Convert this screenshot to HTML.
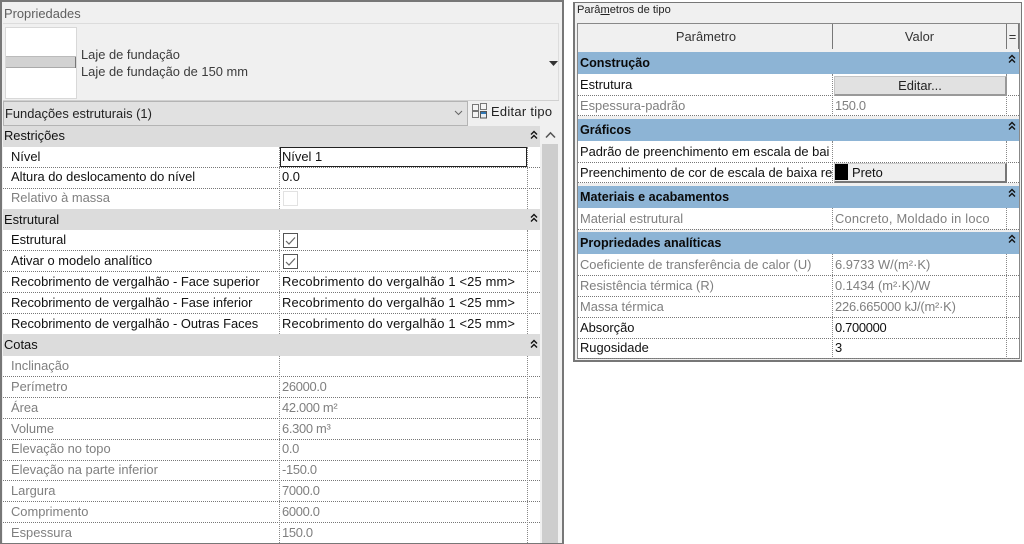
<!DOCTYPE html>
<html lang="pt"><head><meta charset="utf-8"><title>Propriedades</title>
<style>
html,body{margin:0;padding:0;background:#fff}
#r{position:relative;width:1024px;height:544px;overflow:hidden;background:#fff;font:12.9px/20px "Liberation Sans",sans-serif;color:#111}
#r div{position:absolute;white-space:nowrap}
.b{background:#777}
.t{height:20px}
.g{color:#7f7f7f}
.h{background:#dcdcdc}
.c{background:#8db4d5}
.dh{height:0;border-top:1px dotted #777}
.dv{width:0;border-left:1px dotted #888}
.bold{font-weight:bold;color:#0a0a0a;font-size:12.6px}
.cb{width:13px;height:13px;border:1px solid #555;background:#fff}
.rec{letter-spacing:.17px}
.n{letter-spacing:-.3px}
svg{position:absolute;display:block}
</style></head><body><div id="r">

<!-- LEFT PANEL -->
<div style="left:0;top:0;width:564px;height:544px;background:#f0f0f0"></div>
<div class="b" style="left:0;top:0;width:564px;height:2px"></div>
<div class="b" style="left:0;top:0;width:2px;height:544px"></div>
<div class="b" style="left:562px;top:0;width:2px;height:544px"></div>
<div class="b" style="left:0;top:543px;width:564px;height:1px"></div>
<div class="t" style="left:4px;top:4px;color:#5f5f5f">Propriedades</div>
<div style="left:3px;top:23px;width:556px;height:1px;background:#dcdcdc"></div>
<div style="left:558px;top:23px;width:1px;height:77px;background:#dcdcdc"></div>
<div style="left:3px;top:100px;width:556px;height:1px;background:#d0d0d0"></div>
<div style="left:5px;top:27px;width:70px;height:70px;background:#fff;border:1px solid #d8d8d8"></div>
<div style="left:6px;top:56px;width:70px;height:12px;background:#d2d2d2;border-top:1px solid #bbb;border-bottom:1px solid #aaa;box-sizing:border-box"></div>
<div style="left:75px;top:57px;width:1px;height:11px;background:#777"></div>
<div class="t" style="left:81px;top:45px;color:#3c3c3c">Laje de fundação</div>
<div class="t" style="left:81px;top:62px;color:#3c3c3c">Laje de fundação de 150 mm</div>
<svg style="left:549px;top:61px" width="10" height="5"><path d="M0 0H9L4.500 5Z" fill="#333"/></svg>
<div style="left:3px;top:101px;width:463px;height:23px;background:#e1e1e1;border:1px solid #b4b4b4"></div>
<div class="t" style="left:5px;top:104px;color:#222">Fundações estruturais (1)</div>
<svg style="left:454px;top:110px" width="10" height="6"><path d="M1 1L4.500 4.500L8 1" fill="none" stroke="#666" stroke-width="1"/></svg>
<svg style="left:472px;top:103px" width="16" height="16"><path d="M.5 1.500h6v6h-6zM8.500.5h6v6h-6zM.5 8.500h6v6h-6z" fill="#f4f4f4" stroke="#777"/><rect x="8.500" y="8.500" width="6" height="6.500" fill="#e8eef4" stroke="#555"/><rect x="9" y="9" width="5" height="2" fill="#2f77b5"/></svg>
<div class="t" style="left:491px;top:102px;color:#222;letter-spacing:.3px">Editar tipo</div>

<!-- left table -->
<div style="left:3px;top:126px;width:537px;height:417px;background:#fff"></div>
<div class="h" style="left:3px;top:126px;width:537px;height:21px"></div>
<div class="h" style="left:3px;top:209px;width:537px;height:21px"></div>
<div class="h" style="left:3px;top:334px;width:537px;height:22px"></div>
<div class="dh" style="left:3px;top:167px;width:537px"></div>
<div class="dh" style="left:3px;top:188px;width:537px"></div>
<div class="dh" style="left:3px;top:250px;width:537px"></div>
<div class="dh" style="left:3px;top:271px;width:537px"></div>
<div class="dh" style="left:3px;top:292px;width:537px"></div>
<div class="dh" style="left:3px;top:313px;width:537px"></div>
<div class="dh" style="left:3px;top:376px;width:537px"></div>
<div class="dh" style="left:3px;top:397px;width:537px"></div>
<div class="dh" style="left:3px;top:418px;width:537px"></div>
<div class="dh" style="left:3px;top:439px;width:537px"></div>
<div class="dh" style="left:3px;top:460px;width:537px"></div>
<div class="dh" style="left:3px;top:480px;width:537px"></div>
<div class="dh" style="left:3px;top:501px;width:537px"></div>
<div class="dh" style="left:3px;top:522px;width:537px"></div>
<div class="dv" style="left:279px;top:147px;height:62px"></div>
<div class="dv" style="left:527px;top:147px;height:62px"></div>
<div class="dv" style="left:279px;top:230px;height:104px"></div>
<div class="dv" style="left:527px;top:230px;height:104px"></div>
<div class="dv" style="left:279px;top:356px;height:187px"></div>
<div class="dv" style="left:527px;top:356px;height:187px"></div>

<div class="t" style="left:4px;top:126px">Restrições</div>
<div class="t" style="left:4px;top:210px">Estrutural</div>
<div class="t" style="left:4px;top:335px">Cotas</div>

<div class="t" style="left:11px;top:147px">Nível</div>
<div class="t" style="left:11px;top:167px">Altura do deslocamento do nível</div>
<div class="t g" style="left:11px;top:188px">Relativo à massa</div>
<div class="t" style="left:11px;top:230px">Estrutural</div>
<div class="t" style="left:11px;top:251px">Ativar o modelo analítico</div>
<div class="t" style="left:11px;top:272px">Recobrimento de vergalhão - Face superior</div>
<div class="t" style="left:11px;top:293px">Recobrimento de vergalhão - Fase inferior</div>
<div class="t" style="left:11px;top:314px">Recobrimento de vergalhão - Outras Faces</div>
<div class="t g" style="left:11px;top:356px">Inclinação</div>
<div class="t g" style="left:11px;top:377px">Perímetro</div>
<div class="t g" style="left:11px;top:398px">Área</div>
<div class="t g" style="left:11px;top:419px">Volume</div>
<div class="t g" style="left:11px;top:439px">Elevação no topo</div>
<div class="t g" style="left:11px;top:460px">Elevação na parte inferior</div>
<div class="t g" style="left:11px;top:481px">Largura</div>
<div class="t g" style="left:11px;top:502px">Comprimento</div>
<div class="t g" style="left:11px;top:523px">Espessura</div>

<div style="left:280px;top:147px;width:245px;height:18px;background:#fff;border:1px solid #222"></div>
<div class="t" style="left:282px;top:147px">Nível 1</div>
<div class="t" style="left:282px;top:167px">0.0</div>
<div class="cb" style="left:283px;top:191px;border-color:#e2e2e2"></div>
<div class="cb" style="left:283px;top:233px"></div>
<svg style="left:285px;top:236px" width="11" height="10"><path d="M1 5L4 8L10 1.500" fill="none" stroke="#666" stroke-width="1.200"/></svg>
<div class="cb" style="left:283px;top:254px"></div>
<svg style="left:285px;top:257px" width="11" height="10"><path d="M1 5L4 8L10 1.500" fill="none" stroke="#666" stroke-width="1.200"/></svg>
<div class="t rec" style="left:282px;top:272px">Recobrimento do vergalhão 1 &lt;25 mm&gt;</div>
<div class="t rec" style="left:282px;top:293px">Recobrimento do vergalhão 1 &lt;25 mm&gt;</div>
<div class="t rec" style="left:282px;top:314px">Recobrimento do vergalhão 1 &lt;25 mm&gt;</div>
<div class="t g n" style="left:282px;top:377px">26000.0</div>
<div class="t g n" style="left:282px;top:398px">42.000 m²</div>
<div class="t g n" style="left:282px;top:419px">6.300 m³</div>
<div class="t g n" style="left:282px;top:439px">0.0</div>
<div class="t g n" style="left:282px;top:460px">-150.0</div>
<div class="t g n" style="left:282px;top:481px">7000.0</div>
<div class="t g n" style="left:282px;top:502px">6000.0</div>
<div class="t g n" style="left:282px;top:523px">150.0</div>

<svg style="left:529px;top:130px" width="10" height="10"><path d="M2 4.500L5 1.500L8 4.500M2 8.500L5 5.500L8 8.500" fill="none" stroke="#111" stroke-width="1.400"/></svg>
<svg style="left:529px;top:213px" width="10" height="10"><path d="M2 4.500L5 1.500L8 4.500M2 8.500L5 5.500L8 8.500" fill="none" stroke="#111" stroke-width="1.400"/></svg>
<svg style="left:529px;top:339px" width="10" height="10"><path d="M2 4.500L5 1.500L8 4.500M2 8.500L5 5.500L8 8.500" fill="none" stroke="#111" stroke-width="1.400"/></svg>

<!-- scrollbar -->
<div style="left:542px;top:144px;width:16px;height:399px;background:#cdcdcd"></div>
<svg style="left:545px;top:131px" width="11" height="8"><path d="M1 6.500L5.500 1.800L10 6.500" fill="none" stroke="#555" stroke-width="1.500"/></svg>

<!-- RIGHT PANEL -->
<div style="left:573px;top:2px;width:449px;height:359px;background:#f0f0f0"></div>
<div class="b" style="left:573px;top:2px;width:449px;height:1px"></div>
<div class="b" style="left:573px;top:2px;width:2px;height:359px"></div>
<div class="b" style="left:1021px;top:2px;width:1px;height:359px"></div>
<div class="b" style="left:573px;top:360px;width:449px;height:2px"></div>
<div class="t" style="left:577px;top:0;font-size:11.100px;color:#222">Parâ<u>m</u>etros de tipo</div>
<div style="left:577px;top:23px;width:443px;height:336px;background:#fff;border:1px solid #888;box-sizing:border-box"></div>
<div style="left:578px;top:24px;width:441px;height:25px;background:#f0f0f0;border-bottom:1px solid #777"></div>
<div class="b" style="left:832px;top:24px;width:1px;height:25px"></div>
<div class="b" style="left:1006px;top:24px;width:1px;height:25px"></div>
<div class="b" style="left:1018px;top:24px;width:1px;height:25px"></div>
<div style="left:578px;top:49px;width:441px;height:3px;background:#f0f0f0"></div>
<div class="t" style="left:579px;top:27px;width:254px;text-align:center;color:#333">Parâmetro</div>
<div class="t" style="left:833px;top:27px;width:173px;text-align:center;color:#333">Valor</div>
<div class="t" style="left:1007px;top:27px;width:11px;text-align:center;color:#333">=</div>

<div class="c" style="left:578px;top:52px;width:441px;height:22px"></div>
<div class="c" style="left:578px;top:119px;width:441px;height:22px"></div>
<div class="c" style="left:578px;top:186px;width:441px;height:22px"></div>
<div class="c" style="left:578px;top:232px;width:441px;height:22px"></div>
<div class="t bold" style="left:580px;top:53px">Construção</div>
<div class="t bold" style="left:580px;top:120px">Gráficos</div>
<div class="t bold" style="left:580px;top:187px">Materiais e acabamentos</div>
<div class="t bold" style="left:580px;top:233px">Propriedades analíticas</div>
<svg style="left:1007px;top:54px" width="10" height="10"><path d="M2 4.500L5 1.500L8 4.500M2 8.500L5 5.500L8 8.500" fill="none" stroke="#111" stroke-width="1.400"/></svg>
<svg style="left:1007px;top:121px" width="10" height="10"><path d="M2 4.500L5 1.500L8 4.500M2 8.500L5 5.500L8 8.500" fill="none" stroke="#111" stroke-width="1.400"/></svg>
<svg style="left:1007px;top:188px" width="10" height="10"><path d="M2 4.500L5 1.500L8 4.500M2 8.500L5 5.500L8 8.500" fill="none" stroke="#111" stroke-width="1.400"/></svg>
<svg style="left:1007px;top:234px" width="10" height="10"><path d="M2 4.500L5 1.500L8 4.500M2 8.500L5 5.500L8 8.500" fill="none" stroke="#111" stroke-width="1.400"/></svg>

<div style="left:578px;top:116px;width:441px;height:3px;background:#f0f0f0"></div>
<div style="left:578px;top:183px;width:441px;height:3px;background:#f0f0f0"></div>
<div style="left:578px;top:229px;width:441px;height:3px;background:#f0f0f0"></div>

<div class="dh" style="left:578px;top:95px;width:441px"></div>
<div class="dh" style="left:578px;top:115px;width:441px"></div>
<div class="dh" style="left:578px;top:162px;width:441px"></div>
<div class="dh" style="left:578px;top:182px;width:441px"></div>
<div class="dh" style="left:578px;top:229px;width:441px"></div>
<div class="dh" style="left:578px;top:275px;width:441px"></div>
<div class="dh" style="left:578px;top:296px;width:441px"></div>
<div class="dh" style="left:578px;top:317px;width:441px"></div>
<div class="dh" style="left:578px;top:338px;width:441px"></div>
<div class="dh" style="left:578px;top:358px;width:441px"></div>
<div class="dv" style="left:832px;top:74px;height:42px"></div>
<div class="dv" style="left:1006px;top:74px;height:42px"></div>
<div class="dv" style="left:832px;top:141px;height:42px"></div>
<div class="dv" style="left:1006px;top:141px;height:42px"></div>
<div class="dv" style="left:832px;top:208px;height:21px"></div>
<div class="dv" style="left:1006px;top:208px;height:21px"></div>
<div class="dv" style="left:832px;top:254px;height:105px"></div>
<div class="dv" style="left:1006px;top:254px;height:105px"></div>

<div class="t" style="left:580px;top:75px">Estrutura</div>
<div class="t g" style="left:580px;top:96px">Espessura-padrão</div>
<div class="t" style="left:580px;top:142px;width:252px;overflow:hidden">Padrão de preenchimento em escala de bai</div>
<div class="t" style="left:580px;top:163px;width:252px;overflow:hidden">Preenchimento de cor de escala de baixa re</div>
<div class="t g" style="left:580px;top:209px">Material estrutural</div>
<div class="t g" style="left:580px;top:255px">Coeficiente de transferência de calor (U)</div>
<div class="t g" style="left:580px;top:276px">Resistência térmica (R)</div>
<div class="t g" style="left:580px;top:297px">Massa térmica</div>
<div class="t" style="left:580px;top:318px">Absorção</div>
<div class="t" style="left:580px;top:338px">Rugosidade</div>

<div style="left:834px;top:76px;width:170px;height:17px;background:#e1e1e1;border:1px solid #c4c4c4;border-right:2px solid #999;border-bottom:2px solid #999;text-align:center;line-height:18px;color:#222">Editar...</div>
<div class="t g n" style="left:835px;top:96px">150.0</div>
<div style="left:834px;top:163px;width:170px;height:17px;background:#efefef;border:1px solid #ccc;border-right:2px solid #777;border-bottom:2px solid #777"></div>
<div style="left:835px;top:164px;width:13px;height:16px;background:#000"></div>
<div class="t" style="left:852px;top:163px">Preto</div>
<div class="t g" style="left:835px;top:209px;letter-spacing:.2px">Concreto, Moldado in loco</div>
<div class="t g" style="left:835px;top:255px">6.9733 W/(m²·K)</div>
<div class="t g" style="left:835px;top:276px">0.1434 (m²·K)/W</div>
<div class="t g" style="left:835px;top:297px;letter-spacing:-.2px">226.665000 kJ/(m²·K)</div>
<div class="t n" style="left:835px;top:318px">0.700000</div>
<div class="t" style="left:835px;top:338px">3</div>

</div></body></html>
